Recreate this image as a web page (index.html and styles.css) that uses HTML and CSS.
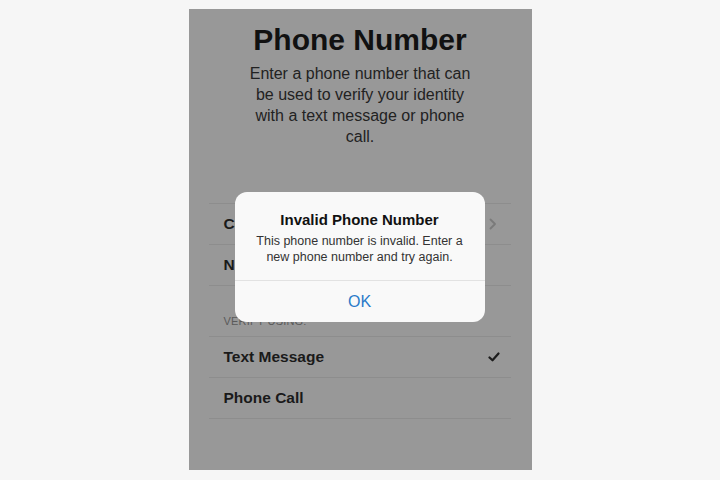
FILE: index.html
```html
<!DOCTYPE html>
<html lang="en">
<head>
    <meta charset="UTF-8">
    <meta name="viewport" content="width=device-width, initial-scale=1.0">
    <title>Phone Number</title>
    <link rel="stylesheet" href="styles.css">
</head>
<body>
    <div class="phone">
        <h1>Phone Number</h1>
        <p class="intro">Enter a phone number that can be used to verify your identity with a text message or phone call.</p>

        <div class="list">
            <div class="row">
                <span>Country</span>
                <svg class="chevron" width="8" height="12" viewBox="0 0 8 12">
                    <path d="M1.5 1.5 L6 6 L1.5 10.5" fill="none" stroke="#7a7a7a" stroke-width="1.8" stroke-linecap="round" stroke-linejoin="round"/>
                </svg>
            </div>
            <div class="row">
                <span>Number</span>
            </div>
        </div>

        <div class="section-title">Verify using:</div>
        <div class="list">
            <div class="row">
                <span>Text Message</span>
                <svg class="check" width="12" height="10" viewBox="0 0 12 10">
                    <path d="M1.5 5.5 L4.5 8.3 L10.5 1.5" fill="none" stroke="#1c1c1c" stroke-width="2.2" stroke-linecap="round" stroke-linejoin="round"/>
                </svg>
            </div>
            <div class="row">
                <span>Phone Call</span>
            </div>
        </div>

        <!-- alert shown over the form -->
        <div class="alert">
            <div class="alert-body">
                <h2>Invalid Phone Number</h2>
                <p>This phone number is invalid. Enter a new phone number and try again.</p>
            </div>
            <button class="alert-btn">OK</button>
        </div>
    </div>
</body>
</html>
```

FILE: styles.css
```css
body {
    margin: 0;
    background-color: #f6f6f6;
    font-family: "Liberation Sans", Arial, sans-serif;
}
.phone {
    position: relative;
    width: 343px;
    height: 461px;
    margin: 9px auto 0;
    background-color: #989898;
    color: #161616;
    overflow: hidden;
}
h1 {
    margin: 0;
    padding-top: 13px;
    font-size: 30px;
    line-height: 36px;
    text-align: center;
    color: #111;
}
.intro {
    width: 232px;
    margin: 5px auto 0;
    font-size: 16px;
    line-height: 21px;
    text-align: center;
    color: #222;
}
.list {
    margin: 0 21px 0 20px;
    border-top: 1px solid #8d8d8d;
}
.list:first-of-type {
    margin-top: 56px;
}
.row {
    display: flex;
    align-items: center;
    justify-content: space-between;
    height: 40px;
    padding: 0 11px 0 15px;
    border-bottom: 1px solid #8d8d8d;
    font-size: 15.5px;
    font-weight: bold;
    color: #1a1a1a;
}
.chevron {
    margin-right: 3px;
}
.section-title {
    margin: 28px 0 8px 35px;
    font-size: 11px;
    line-height: 14px;
    text-transform: uppercase;
    color: #5a5a5a;
    letter-spacing: 0.2px;
}
.alert {
    position: absolute;
    left: 46px;
    top: 183px;
    width: 250px;
    border-radius: 12px;
    background-color: #f9f9f9;
    text-align: center;
}
.alert-body {
    padding: 18px 16px 15px;
    border-bottom: 1px solid #e2e2e2;
}
.alert h2 {
    margin: 0;
    font-size: 15px;
    line-height: 20px;
    color: #111;
}
.alert p {
    margin: 3px 0 0;
    font-size: 12.5px;
    line-height: 16px;
    color: #333;
}
.alert-btn {
    display: block;
    width: 100%;
    height: 41px;
    border: none;
    background: none;
    font-family: "Liberation Sans", Arial, sans-serif;
    font-size: 16px;
    color: #2a7bc9;
}
```
